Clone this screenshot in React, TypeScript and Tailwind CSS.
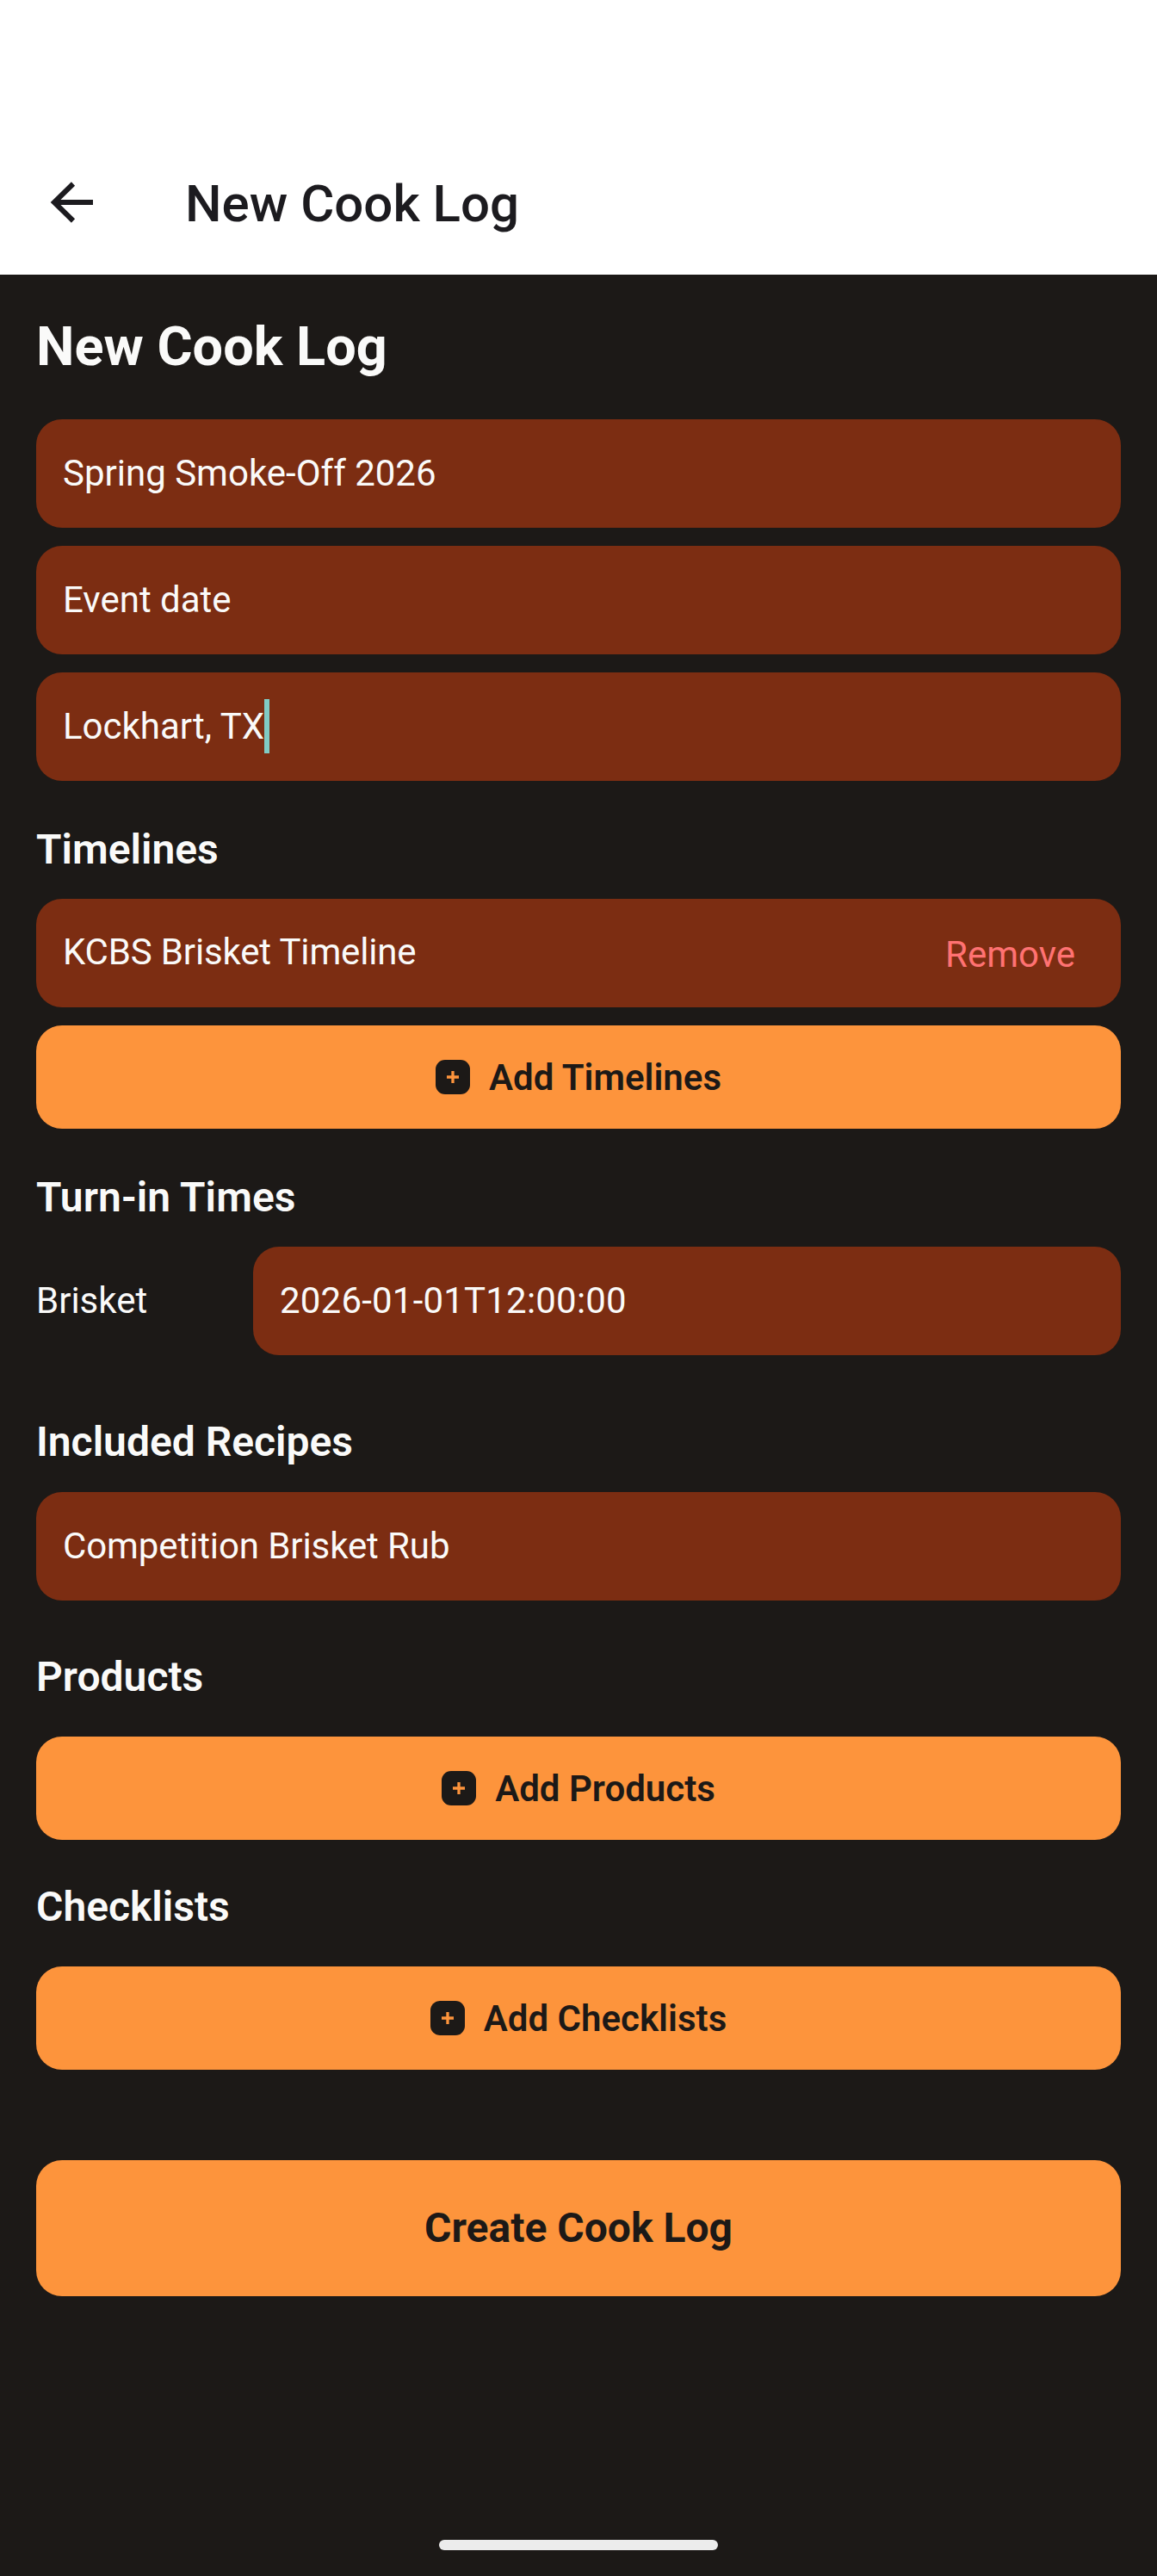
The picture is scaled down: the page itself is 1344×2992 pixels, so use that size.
const font = { fontFamily: "Roboto, sans-serif" };

function Field({ children, className = "" }: { children: React.ReactNode; className?: string }) {
  return (
    <div className={`flex h-[126px] items-center rounded-[30px] bg-[#7c2d12] px-[31px] pb-[2px] text-[42px] text-[#fafaf9] ${className}`}>
      {children}
    </div>
  );
}

function Heading({ children, className = "" }: { children: React.ReactNode; className?: string }) {
  return <h2 className={`text-[48px] leading-[56px] font-semibold text-[#fafaf9] ${className}`}>{children}</h2>;
}

function AddButton({ label }: { label: string }) {
  return (
    <button className="flex h-[120px] w-full items-center justify-center gap-[22px] rounded-[30px] bg-[#fd943c] text-[42px] font-semibold text-[#1c1917]">
      <svg width="40" height="40" viewBox="0 0 40 40" aria-hidden="true">
        <rect width="40" height="40" rx="11" fill="#1c1917" />
        <path d="M20 13v14M13 20h14" stroke="#fd943c" strokeWidth="3.3" />
      </svg>
      <span className="mt-[1px]">{label}</span>
    </button>
  );
}

export default function App() {
  return (
    <div style={font} className="flex h-[2992px] w-[1344px] flex-col overflow-hidden bg-[#1c1917]">
      <header className="flex h-[319px] shrink-0 items-center bg-white pt-[151px]">
        <svg className="ml-[58px]" width="52" height="52" viewBox="0 0 52 52" fill="none" stroke="#1c1b1f" strokeWidth="6" aria-label="Back">
          <path d="M50 26H5" />
          <path d="M27 4.5L5 26l22 21.5" />
        </svg>
        <div className="mt-[4px] ml-[105px] text-[60px] leading-[70px] font-medium text-[#1c1b1f]">New Cook Log</div>
      </header>

      <main className="relative flex-1 px-[42px]">
        <h1 className="mt-[46px] text-[63px] leading-[76px] font-bold text-[#fafaf9]">New Cook Log</h1>

        <div className="mt-[46px] flex flex-col gap-[21px]">
          <Field>Spring Smoke-Off 2026</Field>
          <Field>Event date</Field>
          <Field>
            Lockhart, TX
            <span className="h-[63px] w-[6px] bg-[#80cbc4]" />
          </Field>
        </div>

        <Heading className="relative top-[2px] mt-[50px]">Timelines</Heading>
        <Field className="mt-[31px] justify-between pr-[53px]">
          <span className="-mt-[2px] tracking-[-0.15px]">KCBS Brisket Timeline</span>
          <span className="mt-[5px] text-[#ff7272]">Remove</span>
        </Field>
        <div className="mt-[21px]">
          <AddButton label="Add Timelines" />
        </div>

        <Heading className="relative top-[1px] mt-[51px] tracking-[0.1px]">Turn-in Times</Heading>
        <div className="mt-[30px] flex items-center">
          <span className="w-[252px] pb-[2px] text-[42px] text-[#fafaf9]">Brisket</span>
          <Field className="flex-1 tracking-[0.2px]">2026-01-01T12:00:00</Field>
        </div>

        <Heading className="relative top-[1px] mt-[72px]">Included Recipes</Heading>
        <Field className="mt-[31px] tracking-[-0.1px]">Competition Brisket Rub</Field>

        <Heading className="relative top-[1px] mt-[60px]">Products</Heading>
        <div className="mt-[42px]">
          <AddButton label="Add Products" />
        </div>

        <Heading className="relative top-[1px] mt-[49px]">Checklists</Heading>
        <div className="mt-[42px]">
          <AddButton label="Add Checklists" />
        </div>

        <button className="mt-[105px] h-[158px] w-full rounded-[30px] bg-[#fd943c] text-[48px] font-bold text-[#1c1917]">
          Create Cook Log
        </button>

        <div className="absolute bottom-[30px] left-[510px] h-[12px] w-[324px] rounded-full bg-[#ececec]" />
      </main>
    </div>
  );
}
